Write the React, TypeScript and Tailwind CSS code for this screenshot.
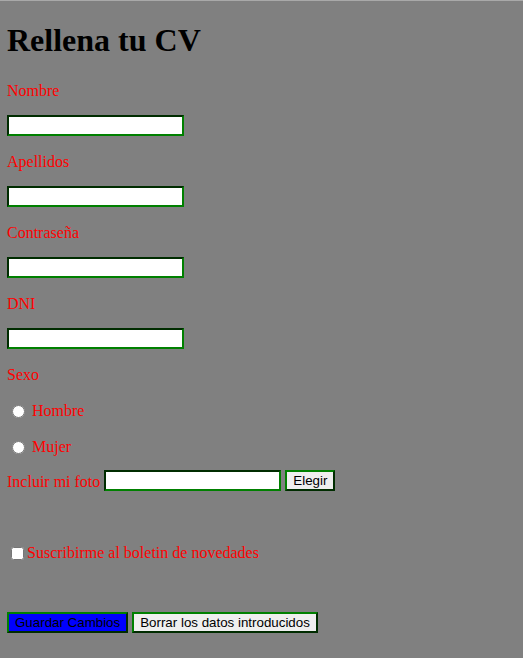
import React from 'react';

const inputClass =
  "block h-[21px] w-[177px] bg-white border-2 border-[#008000] [border-style:inset] px-[2px] font-['Liberation_Sans',sans-serif] text-[13.333px] text-black outline-none";

const buttonClass =
  "h-[21px] border-2 border-[#008000] [border-style:outset] px-[6px] font-['Liberation_Sans',sans-serif] text-[13.333px] leading-[15px] text-black";

function Field({ label, type = 'text', first = false }: { label: string; type?: string; first?: boolean }) {
  return (
    <>
      <p className={first ? 'mt-[23px]' : 'mt-[17px]'}>{label}</p>
      <div className="mt-[15px]">
        <input type={type} className={inputClass} />
      </div>
    </>
  );
}

export default function App() {
  return (
    <div className="min-h-[658px] bg-[#808080] border-t border-[#a9a9a9] px-[7px] pb-6 font-['Liberation_Serif',serif] text-[16px] leading-[18px] text-[#ff0000]">
      <h1 className="mt-[21px] text-[32px] font-bold leading-[37px] text-black">Rellena tu CV</h1>

      <form onSubmit={e => e.preventDefault()}>
        <Field label="Nombre" first />
        <Field label="Apellidos" />
        <Field label="Contraseña" type="password" />
        <Field label="DNI" />

        <p className="mt-[17px]">Sexo</p>
        <label className="mt-[18px] flex h-[18px] items-center">
          <input type="radio" name="sexo" className="ml-[5px] mr-[7px] h-[13px] w-[13px]" />
          Hombre
        </label>
        <label className="mt-[18px] flex h-[18px] items-center">
          <input type="radio" name="sexo" className="ml-[5px] mr-[7px] h-[13px] w-[13px]" />
          Mujer
        </label>

        <div className="mt-[14px] flex h-[21px] items-center gap-[4px]">
          <span className="pt-[2px]">Incluir mi foto</span>
          <input type="text" className={inputClass} />
          <button type="button" className={`${buttonClass} bg-[#efefef]`}>Elegir</button>
        </div>

        <label className="mt-[53px] flex h-[18px] items-center">
          <input type="checkbox" className="ml-[4px] mr-[3px] h-[13px] w-[13px]" />
          Suscribirme al boletin de novedades
        </label>

        <div className="mt-[50px] flex gap-[4px]">
          <button type="submit" className={`${buttonClass} bg-[#0000ff]`}>Guardar Cambios</button>
          <button type="reset" className={`${buttonClass} bg-[#efefef]`}>Borrar los datos introducidos</button>
        </div>
      </form>
    </div>
  );
}
